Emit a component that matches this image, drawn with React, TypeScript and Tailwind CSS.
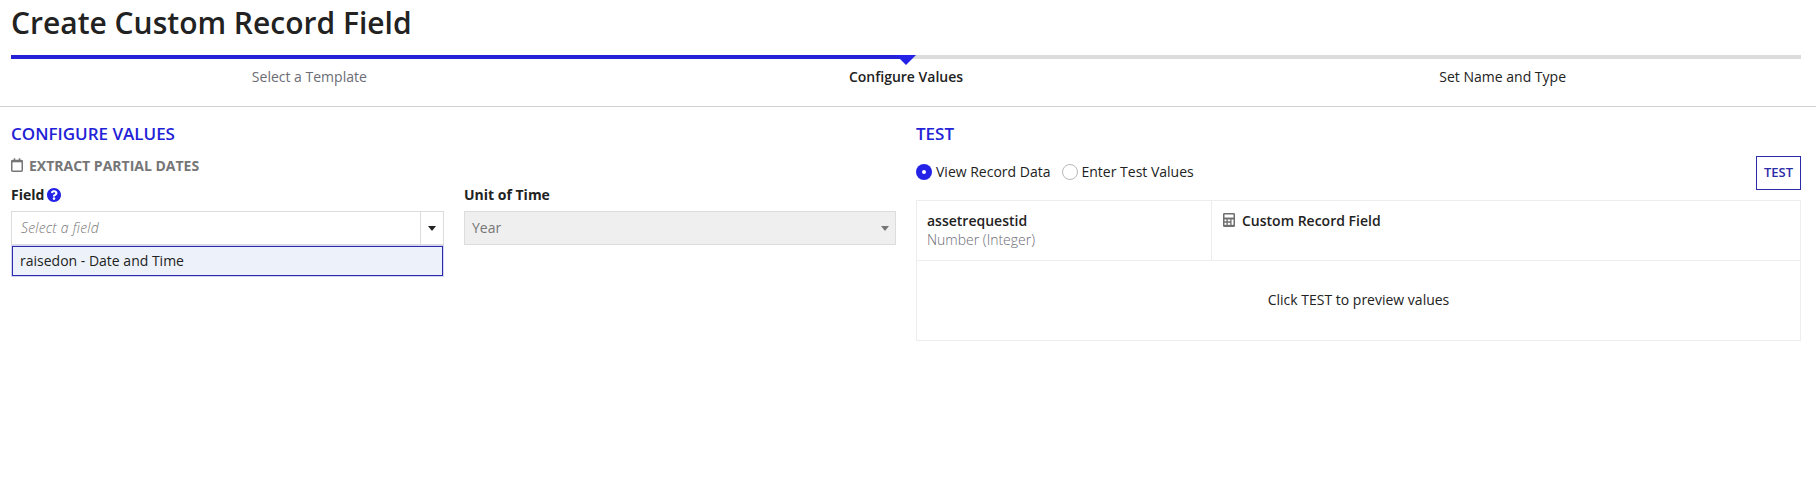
import type { ReactNode } from "react";

const steps = [
  { label: "Select a Template", style: "text-[#6c6c75]" },
  { label: "Configure Values", style: "font-semibold text-[#222]" },
  { label: "Set Name and Type", style: "text-[#222]" },
];

function Progress() {
  return (
    <div className="relative h-1 bg-[#dcdcdc]">
      <div className="h-1 w-[895px] bg-[#2322d6]" />
      <svg className="absolute top-0 left-[885px]" width="20" height="10" viewBox="0 0 20 10">
        <path d="M0 0H20L10 10Z" fill="#2322e6" />
      </svg>
    </div>
  );
}

function SectionTitle({ children }: { children: ReactNode }) {
  return <h2 className="text-[17px] leading-6 font-semibold text-[#2322d6]">{children}</h2>;
}

function Caret({ color }: { color: string }) {
  return (
    <svg width="8" height="5" viewBox="0 0 8 5" fill={color}>
      <path d="M0 0H8L4.6 4.3Q4 5 3.4 4.3Z" />
    </svg>
  );
}

function CalendarIcon() {
  return (
    <svg width="12" height="14" viewBox="0 0 12 14" fill="none" stroke="#767676">
      <rect x="0.75" y="2.4" width="10.5" height="10.8" rx="0.9" strokeWidth="1.5" />
      <path d="M0.5 3.2H11.5" strokeWidth="2.2" />
      <path d="M3.5 0.3V3M8.5 0.3V3" strokeWidth="1.5" />
    </svg>
  );
}

function HelpIcon() {
  return (
    <svg width="14" height="14" viewBox="8 8 496 496" fill="#2322e6">
      <path d="M504 256c0 136.997-111.043 248-248 248S8 392.997 8 256C8 119.083 119.043 8 256 8s248 111.083 248 248zM262.655 90c-54.497 0-89.255 22.957-116.549 63.758-3.536 5.286-2.353 12.415 2.715 16.258l34.699 26.31c5.205 3.947 12.621 3.008 16.665-2.122 17.864-22.658 30.113-35.797 57.303-35.797 20.429 0 45.698 13.148 45.698 32.958 0 14.976-12.363 22.667-32.534 33.976C247.128 238.528 216 254.941 216 296v4c0 6.627 5.373 12 12 12h56c6.627 0 12-5.373 12-12v-1.333c0-28.462 83.186-29.647 83.186-106.667 0-58.002-60.165-102-116.531-102zM256 338c-25.365 0-46 20.635-46 46 0 25.364 20.635 46 46 46s46-20.636 46-46c0-25.365-20.635-46-46-46z" />
    </svg>
  );
}

function CalculatorIcon() {
  return (
    <svg width="12" height="14" viewBox="0 0 12 14" fill="none" stroke="#6f6f6f">
      <rect x="0.75" y="0.75" width="10.5" height="12.5" rx="0.6" strokeWidth="1.5" />
      <path d="M0.5 5.5H11.5" strokeWidth="1.9" />
      <path d="M1 9H8M4.1 6V13M7.9 6V13" strokeWidth="1.3" />
      <path d="M1 12.6H11" strokeWidth="1.5" />
    </svg>
  );
}

function Configure() {
  return (
    <section className="w-[885px]">
      <SectionTitle>CONFIGURE VALUES</SectionTitle>
      <div className="mt-[9px] flex h-5 items-center gap-1.5 text-[14px] font-bold text-[#767676]">
        <CalendarIcon />
        <span>EXTRACT PARTIAL DATES</span>
      </div>
      <div className="mt-[10px] flex gap-5 text-[14px] leading-5">
        <div className="w-[433px]">
          <div className="flex h-5 items-center gap-[3px] font-bold">
            <span>Field</span>
            <HelpIcon />
          </div>
          <div className="mt-[6px] flex h-[34px] border border-[#dcdcdc]">
            <div className="flex flex-1 items-center pl-[9px] font-light tracking-[0.2px] text-[#767676] italic">
              Select a field
            </div>
            <div className="flex w-[23px] items-center justify-center border-l border-[#dcdcdc]">
              <Caret color="#222" />
            </div>
          </div>
          <div className="border border-[#d4d4f6]">
            <div className="flex h-[30px] items-center border border-[#2c2ba8] bg-[#edf2fa] pl-[7px]">
              raisedon - Date and Time
            </div>
          </div>
        </div>
        <div className="w-[432px]">
          <div className="h-5 font-bold">Unit of Time</div>
          <div className="mt-[6px] flex h-[34px] items-center justify-between border border-[#dcdcdc] bg-[#efefef] pr-[6px] pl-[7px] text-[#767676]">
            <span>Year</span>
            <Caret color="#767676" />
          </div>
        </div>
      </div>
    </section>
  );
}

function TestPanel() {
  return (
    <section className="w-[885px]">
      <SectionTitle>TEST</SectionTitle>
      <div className="mt-[10px] flex h-[34px] justify-between">
        <div className="flex h-8 items-center text-[14px] leading-5">
          <span className="flex size-4 items-center justify-center rounded-full bg-[#2322e6]">
            <span className="size-1 rounded-full bg-white" />
          </span>
          <span className="ml-1">View Record Data</span>
          <span className="ml-[11px] size-4 rounded-full border border-[#b8b8b8]" />
          <span className="ml-1">Enter Test Values</span>
        </div>
        <button className="w-[45px] border border-[#2c2ba8] pb-[3px] text-[13px] leading-5 font-semibold text-[#2c2ba8]">TEST</button>
      </div>
      <div className="mt-[10px] h-[141px] border border-[#ededed] text-[14px]">
        <div className="flex h-[60px] border-b border-[#ededed]">
          <div className="w-[295px] border-r border-[#ededed] pt-[10px] pl-[10px]">
            <div className="leading-[19px] font-semibold">assetrequestid</div>
            <div className="leading-[19px] font-light text-[#6c6c75]">Number (Integer)</div>
          </div>
          <div className="flex gap-[7px] pt-[10px] pl-[11px]">
            <div className="pt-[2px]">
              <CalculatorIcon />
            </div>
            <div className="leading-[19px] font-semibold">Custom Record Field</div>
          </div>
        </div>
        <div className="flex h-[77px] items-center justify-center">Click TEST to preview values</div>
      </div>
    </section>
  );
}

export default function App() {
  return (
    <main className="h-[487px] overflow-hidden bg-white font-['Open_Sans',sans-serif] text-[#222]">
      <header className="h-[107px] border-b border-[#d2d2d2] pr-[15px] pl-[11px]">
        <h1 className="h-[55px] text-[30px] leading-[46px] font-semibold">Create Custom Record Field</h1>
        <Progress />
        <div className="mt-2 grid grid-cols-3 text-center text-[14px] leading-5">
          {steps.map((s) => (
            <div key={s.label} className={s.style}>
              {s.label}
            </div>
          ))}
        </div>
      </header>
      <div className="flex gap-5 pt-[15px] pl-[11px]">
        <Configure />
        <TestPanel />
      </div>
    </main>
  );
}
